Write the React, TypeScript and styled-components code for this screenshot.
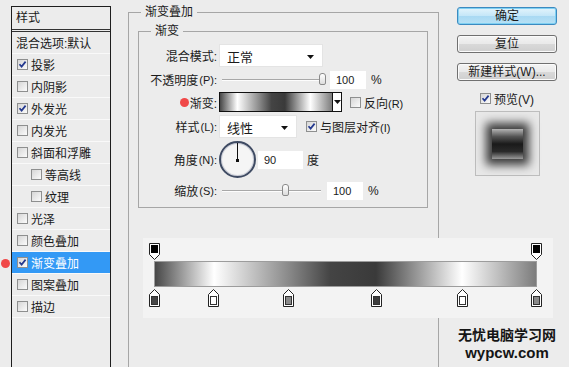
import styled, { createGlobalStyle } from 'styled-components';

const GlobalStyle = createGlobalStyle`
  html, body {
    margin: 0;
    padding: 0;
    background: #ececec;
  }
  body {
    font-family: "Liberation Sans", "Noto Sans CJK SC", sans-serif;
    font-size: 12px;
    color: #1a1a1a;
  }
`;

const GRADIENT =
  'linear-gradient(to right, #474747 0%, #ffffff 15.5%, #8a8a8a 35%, #444444 46%, #3a3a3a 58%, #ffffff 80.6%, #7c7c7c 100%)';

const Dialog = styled.div`
  position: relative;
  width: 569px;
  height: 367px;
  overflow: hidden;
  display: flex;
  align-items: flex-start;
  background: #ececec;
`;

/* ---------- left style list ---------- */

const StyleList = styled.div`
  flex-shrink: 0;
  margin: 6px 0 0 11px;
  width: 100px;
  height: 400px;
  box-sizing: border-box;
  border: 1px solid #1e1e1e;
`;

const ListHeader = styled.div`
  height: 22px;
  line-height: 22px;
  padding-left: 4px;
  border-bottom: 3px double #333;
`;

const ListItem = styled.div<{ $indent?: boolean; $active?: boolean }>`
  display: flex;
  align-items: center;
  gap: 3px;
  height: 21px;
  padding-left: ${(p) => (p.$indent ? '19px' : '5px')};
  border-bottom: 1px solid #f9f9f9;
  background: ${(p) => (p.$active ? '#3399f5' : 'transparent')};
  color: ${(p) => (p.$active ? '#fff' : '#1a1a1a')};
  white-space: nowrap;
`;

const PlainItem = styled(ListItem)`
  padding-left: 4px;
`;

const RedDot = styled.span`
  display: inline-block;
  width: 9px;
  height: 9px;
  border-radius: 50%;
  background: #f04848;
  flex-shrink: 0;
`;

const MarkerDot = styled(RedDot)`
  position: absolute;
  left: 1px;
  top: 259px;
`;

const Box = styled.span`
  position: relative;
  display: inline-block;
  flex-shrink: 0;
  width: 11px;
  height: 11px;
  box-sizing: border-box;
  border: 1px solid #8e8f8f;
  background: linear-gradient(135deg, #d6d6d6, #fbfbfb);
  svg {
    position: absolute;
    left: 0;
    top: 0;
  }
`;

const Check = ({ on }: { on?: boolean }) => (
  <Box>
    {on && (
      <svg width="9" height="9" viewBox="0 0 9 9">
        <path d="M1.5 4.2 L3.6 6.6 L7.6 1.6" fill="none" stroke="#24398f" strokeWidth="1.7" />
      </svg>
    )}
  </Box>
);

/* ---------- middle settings ---------- */

const OuterGroup = styled.fieldset`
  flex-shrink: 0;
  margin: 4px 0 0 17px;
  padding: 3px 9px 0 9px;
  width: 311px;
  height: 420px;
  box-sizing: border-box;
  border: 1px solid #a6a6a6;
`;

const GroupTitle = styled.legend<{ $offset: number }>`
  margin-left: ${(p) => p.$offset}px;
  padding: 0 4px;
  line-height: 16px;
  font-size: 12px;
`;

const InnerGroup = styled.fieldset`
  margin: 0;
  padding: 5px 0 0 0;
  width: 290px;
  height: 185px;
  box-sizing: border-box;
  border: 1px solid #a6a6a6;
  display: flex;
  flex-direction: column;
  gap: 3px;
`;

const Row = styled.div<{ $h: number }>`
  display: grid;
  grid-template-columns: 78px auto;
  column-gap: 2px;
  align-items: center;
  height: ${(p) => p.$h}px;
`;

const Label = styled.div`
  display: flex;
  align-items: center;
  justify-content: flex-end;
  gap: 1px;
  white-space: nowrap;
`;

const Controls = styled.div`
  display: flex;
  align-items: center;
`;

const Select = styled.div<{ $w: number }>`
  display: flex;
  align-items: center;
  justify-content: space-between;
  width: ${(p) => p.$w}px;
  height: 23px;
  box-sizing: border-box;
  padding: 2px 8px 0 7px;
  background: #fff;
  border: 1px solid #e4e4e4;
  font-size: 13px;
`;

const Arrow = () => (
  <svg width="7" height="4" viewBox="0 0 7 4">
    <path d="M0 0 H7 L3.5 4 Z" fill="#111" />
  </svg>
);

const Slider = styled.div<{ $w: number }>`
  position: relative;
  width: ${(p) => p.$w}px;
  height: 14px;
  margin-left: 3px;
`;

const Track = styled.div`
  position: absolute;
  left: 0;
  right: 0;
  top: 6px;
  height: 1px;
  background: #a8a8a8;
  border-bottom: 1px solid #fdfdfd;
`;

const Thumb = styled.div`
  position: absolute;
  top: 0;
  width: 7px;
  height: 12px;
  box-sizing: border-box;
  margin-left: -3px;
  border: 1px solid #8a8a8a;
  border-radius: 3px 3px 2px 2px;
  background: linear-gradient(#ffffff, #dcdcdc);
`;

const NumberBox = styled.div<{ $w: number; $ml: number }>`
  width: ${(p) => p.$w}px;
  height: 18px;
  line-height: 19px;
  margin-left: ${(p) => p.$ml}px;
  padding-left: 6px;
  box-sizing: border-box;
  background: #fff;
  font-size: 11px;
`;

const Unit = styled.span<{ $ml: number }>`
  margin-left: ${(p) => p.$ml}px;
`;

const Swatch = styled.div`
  width: 113px;
  height: 20px;
  box-sizing: border-box;
  border: 1px solid #111;
  border-right: none;
  background: ${GRADIENT};
`;

const SwatchDrop = styled.div`
  display: flex;
  align-items: center;
  justify-content: center;
  width: 10px;
  height: 20px;
  box-sizing: border-box;
  border: 1px solid #111;
  background: #fff;
`;

const CheckLabel = styled.label<{ $ml: number }>`
  display: flex;
  align-items: center;
  gap: 3px;
  margin-left: ${(p) => p.$ml}px;
  white-space: nowrap;
`;

const Small = styled.span`
  font-size: 11px;
`;

const Dial = styled.div`
  position: relative;
  width: 37px;
  height: 37px;
  box-sizing: border-box;
  border: 2px solid #3f4b63;
  border-radius: 50%;
  background: radial-gradient(circle, #f5f5f5 60%, #dcdde2);
  box-shadow: inset 0 0 0 1px #c9ccd6;
`;

const DialHand = styled.div`
  position: absolute;
  left: 16px;
  top: 0;
  width: 1px;
  height: 17px;
  background: #111;
  &::after {
    content: '';
    position: absolute;
    left: -1px;
    bottom: -2px;
    width: 3px;
    height: 3px;
    background: #111;
  }
`;

/* ---------- right column ---------- */

const Side = styled.div`
  flex-shrink: 0;
  display: flex;
  flex-direction: column;
  align-items: center;
  width: 100px;
  margin: 7px 0 0 18px;
`;

const Button = styled.div<{ $primary?: boolean }>`
  width: 100px;
  height: 18px;
  line-height: 17px;
  box-sizing: border-box;
  margin-bottom: 10px;
  text-align: center;
  font-size: 12px;
  border-radius: 3px;
  border: 1px solid ${(p) => (p.$primary ? '#3c8ac0' : '#707070')};
  background: ${(p) =>
    p.$primary
      ? 'linear-gradient(#e3f4fc 0%, #c4e6f8 50%, #a9d9f3 51%, #b7e1f5 100%)'
      : 'linear-gradient(#f4f4f4 0%, #e9e9e9 50%, #d9d9d9 51%, #cfcfcf 100%)'};
  box-shadow: ${(p) => (p.$primary ? 'inset 0 0 0 1px #7fd0f2' : 'inset 0 0 0 1px #fbfbfb')};
`;

const PreviewToggle = styled(CheckLabel)`
  height: 14px;
`;

const PreviewBox = styled.div`
  display: flex;
  align-items: center;
  justify-content: center;
  width: 65px;
  height: 65px;
  margin-top: 6px;
  box-sizing: border-box;
  border: 1px solid #bdbdbd;
  background: #e8e8e8;
`;

const PreviewSquare = styled.div`
  width: 31px;
  height: 30px;
  background: linear-gradient(#b4b4b4 0%, #555 25%, #1a1a1a 50%, #2a2a2a 75%, #9a9a9a 100%);
  box-shadow: 0 0 9px 6px rgba(0, 0, 0, 0.75);
`;

/* ---------- gradient editor overlay ---------- */

const Editor = styled.div`
  position: absolute;
  left: 143px;
  top: 238px;
  width: 410px;
  height: 80px;
  padding: 23px 0 0 11px;
  box-sizing: border-box;
  background: #f3f3f3;
`;

const Bar = styled.div`
  width: 383px;
  height: 26px;
  box-sizing: border-box;
  border: 1px solid #9c9c9c;
  background: ${GRADIENT};
`;

const StopMark = styled.svg<{ $top: number }>`
  position: absolute;
  top: ${(p) => p.$top}px;
`;

const Watermark = styled.div`
  position: absolute;
  left: 455px;
  top: 327px;
  width: 104px;
  display: flex;
  flex-direction: column;
  align-items: center;
  gap: 4px;
  font-weight: bold;
  color: #151515;
`;

const MarkCn = styled.div`
  font-family: "Noto Sans CJK SC", sans-serif;
  font-size: 14px;
  line-height: 15px;
`;

const MarkEn = styled.div`
  font-family: "Liberation Sans", sans-serif;
  font-size: 15px;
  line-height: 14px;
`;

const opacityStops = [0, 100];
const colorStops = [
  { at: 0, color: '#474747' },
  { at: 15.5, color: '#ffffff' },
  { at: 35, color: '#8a8a8a' },
  { at: 58, color: '#3e3e3e' },
  { at: 80.6, color: '#ffffff' },
  { at: 100, color: '#8a8a8a' },
];

const stopLeft = (at: number) => 11.5 + (at / 100) * 382 - 5.5;

const listItems: { text: string; on?: boolean; indent?: boolean; active?: boolean }[] = [
  { text: '投影', on: true },
  { text: '内阴影' },
  { text: '外发光', on: true },
  { text: '内发光' },
  { text: '斜面和浮雕' },
  { text: '等高线', indent: true },
  { text: '纹理', indent: true },
  { text: '光泽' },
  { text: '颜色叠加' },
  { text: '渐变叠加', on: true, active: true },
  { text: '图案叠加' },
  { text: '描边' },
];

export default function App() {
  return (
    <Dialog>
      <GlobalStyle />
      <MarkerDot />
      <StyleList>
        <ListHeader>样式</ListHeader>
        <PlainItem>混合选项:默认</PlainItem>
        {listItems.map((it) => (
          <ListItem key={it.text} $indent={it.indent} $active={it.active}>
            <Check on={it.on} />
            {it.text}
          </ListItem>
        ))}
      </StyleList>

      <OuterGroup>
        <GroupTitle $offset={3}>渐变叠加</GroupTitle>
        <InnerGroup>
          <GroupTitle $offset={12}>渐变</GroupTitle>
          <Row $h={23}>
            <Label>混合模式:</Label>
            <Controls>
              <Select $w={104}>
                正常
                <Arrow />
              </Select>
            </Controls>
          </Row>
          <Row $h={19}>
            <Label>
              不透明度<Small>(P):</Small>
            </Label>
            <Controls>
              <Slider $w={100}>
                <Track />
                <Thumb style={{ left: '100%' }} />
              </Slider>
              <NumberBox $w={36} $ml={8}>100</NumberBox>
              <Unit $ml={5}>%</Unit>
            </Controls>
          </Row>
          <Row $h={20}>
            <Label>
              <RedDot />
              渐变:
            </Label>
            <Controls>
              <Swatch />
              <SwatchDrop>
                <Arrow />
              </SwatchDrop>
              <CheckLabel $ml={8}>
                <Check />
                <span>
                  反向<Small>(R)</Small>
                </span>
              </CheckLabel>
            </Controls>
          </Row>
          <Row $h={23}>
            <Label>
              样式<Small>(L):</Small>
            </Label>
            <Controls>
              <Select $w={78}>
                线性
                <Arrow />
              </Select>
              <CheckLabel $ml={9}>
                <Check on />
                <span>
                  与图层对齐<Small>(I)</Small>
                </span>
              </CheckLabel>
            </Controls>
          </Row>
          <Row $h={37}>
            <Label>
              角度<Small>(N):</Small>
            </Label>
            <Controls>
              <Dial>
                <DialHand />
              </Dial>
              <NumberBox $w={45} $ml={2}>90</NumberBox>
              <Unit $ml={4}>度</Unit>
            </Controls>
          </Row>
          <Row $h={19}>
            <Label>
              缩放<Small>(S):</Small>
            </Label>
            <Controls>
              <Slider $w={99}>
                <Track />
                <Thumb style={{ left: '64%' }} />
              </Slider>
              <NumberBox $w={36} $ml={6}>100</NumberBox>
              <Unit $ml={5}>%</Unit>
            </Controls>
          </Row>
        </InnerGroup>
      </OuterGroup>

      <Side>
        <Button $primary>确定</Button>
        <Button>复位</Button>
        <Button>新建样式(W)...</Button>
        <PreviewToggle $ml={0}>
          <Check on />
          <span>预览(V)</span>
        </PreviewToggle>
        <PreviewBox>
          <PreviewSquare />
        </PreviewBox>
      </Side>

      <Editor>
        {opacityStops.map((at) => (
          <StopMark key={at} $top={5} width="11" height="17" viewBox="0 0 11 17" style={{ left: stopLeft(at) }}>
            <path d="M0.5 0.5 H10.5 V11.5 L5.5 16.5 L0.5 11.5 Z" fill="#fff" stroke="#222" />
            <rect x="2" y="2" width="7" height="8" fill="#000" />
          </StopMark>
        ))}
        <Bar />
        {colorStops.map((s) => (
          <StopMark key={s.at} $top={51} width="11" height="18" viewBox="0 0 11 18" style={{ left: stopLeft(s.at) }}>
            <path d="M5.5 0.5 L10.5 5.5 V17.5 H0.5 V5.5 Z" fill="#fff" stroke="#222" />
            <rect x="2.5" y="7.5" width="6" height="8" fill={s.color} stroke="#333" />
          </StopMark>
        ))}
      </Editor>

      <Watermark>
        <MarkCn>无忧电脑学习网</MarkCn>
        <MarkEn>wypcw.com</MarkEn>
      </Watermark>
    </Dialog>
  );
}
